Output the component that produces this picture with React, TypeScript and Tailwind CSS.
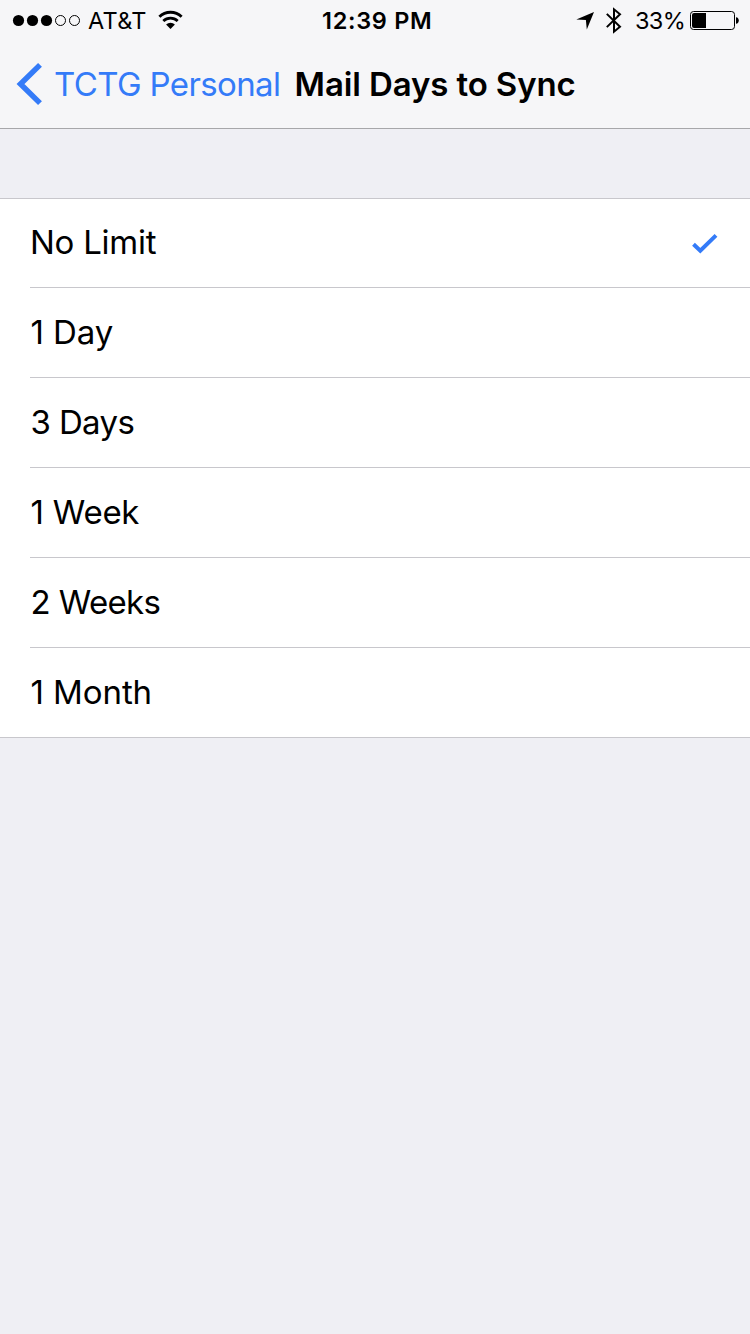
import React from "react";

const options = [
  { label: "No Limit", tracking: "tracking-[-0.25px]", selected: true },
  { label: "1 Day", tracking: "tracking-[-0.1px]" },
  { label: "3 Days", tracking: "tracking-[-0.65px]" },
  { label: "1 Week", tracking: "tracking-[-0.25px]" },
  { label: "2 Weeks", tracking: "tracking-[-0.65px]" },
  { label: "1 Month", tracking: "tracking-[-0.1px]" },
];

function SignalDots() {
  return (
    <svg width="70" height="14" viewBox="0 0 70 14" className="shrink-0">
      {[6, 20, 34].map((x) => (
        <circle key={x} cx={x + 0.5} cy="7.5" r="5.6" fill="#000" />
      ))}
      {[48, 62].map((x) => (
        <circle key={x} cx={x + 0.5} cy="7.5" r="5" fill="none" stroke="#000" strokeWidth="1" />
      ))}
    </svg>
  );
}

function WifiIcon() {
  return (
    <svg width="26" height="20" viewBox="0 0 26 20" className="shrink-0">
      <path d="M1.4 6.7A16 16 0 0 1 23.6 6.7" fill="none" stroke="#000" strokeWidth="2.9" />
      <path d="M5.3 11A10.4 10.4 0 0 1 19.7 11" fill="none" stroke="#000" strokeWidth="2.7" />
      <path d="M12.5 19L8.1 14.6A6.2 6.2 0 0 1 16.9 14.6Z" fill="#000" />
    </svg>
  );
}

function LocationIcon() {
  return (
    <svg width="18" height="20" viewBox="0 0 18 20" className="shrink-0">
      <path d="M18 2L10.8 19.5L9.9 10.1L0.3 9.5Z" fill="#000" />
    </svg>
  );
}

function BluetoothIcon() {
  return (
    <svg width="16" height="28" viewBox="0 0 16 28" className="shrink-0">
      <path d="M0.8 7.9L14 20.7L8 25.7V3.3L14 8.3L0.8 21.1" fill="none" stroke="#000" strokeWidth="2" />
    </svg>
  );
}

function BatteryIcon() {
  return (
    <svg width="49" height="20" viewBox="0 0 49 20" className="shrink-0">
      <rect x="0.5" y="1.5" width="44" height="18" rx="3" fill="none" stroke="#000" />
      <path d="M4 3H16V18H4A2 2 0 0 1 2 16V5A2 2 0 0 1 4 3Z" fill="#000" />
      <path d="M46 7.2C49.7 7.5 49.7 13.5 46 13.8Z" fill="#000" />
    </svg>
  );
}

export default function App() {
  return (
    <div className="flex h-[1334px] w-[750px] flex-col overflow-hidden bg-[#efeff4] font-['Inter','Liberation_Sans',sans-serif] text-black">
      <header className="h-[129px] shrink-0 border-b border-[#a7a7aa] bg-[#f6f6f8]">
        <div className="grid h-10 grid-cols-[322px_1fr_174px] items-center whitespace-nowrap text-[23.5px] leading-[38px]">
          <div className="flex items-center pl-3">
            <SignalDots />
            <span className="ml-[6px] w-[64px] pt-0.5 tracking-[0.3px]">AT&amp;T</span>
            <span className="ml-[6px] flex"><WifiIcon /></span>
          </div>
          <span className="pt-0.5 font-semibold tracking-[0.7px]">12:39 PM</span>
          <div className="flex items-center">
            <LocationIcon />
            <span className="ml-3 flex"><BluetoothIcon /></span>
            <span className="ml-[13px] w-[55px] pt-0.5 tracking-[-0.7px]">33%</span>
            <BatteryIcon />
          </div>
        </div>
        <nav className="flex h-[88px] items-center whitespace-nowrap text-[33px] leading-[88px]">
          <button className="flex items-center text-[#347bf8]">
            <svg width="54" height="44" viewBox="0 0 54 44" className="shrink-0">
              <path d="M40 2.9L20.5 22L40 41.1" fill="none" stroke="currentColor" strokeWidth="5.5" />
            </svg>
            <span className="w-[240.6px] text-left tracking-[-0.62px]">TCTG Personal</span>
          </button>
          <h1 className="font-semibold tracking-[-0.12px]">Mail Days to Sync</h1>
        </nav>
      </header>
      <main className="mt-[69px] border-t border-[#c8c7cc] bg-white">
        <ul>
          {options.map((o, i) => (
            <li key={o.label} className={i === options.length - 1 ? "border-b border-[#c8c7cc]" : "pl-[30px]"}>
              <button
                className={`flex w-full items-center justify-between pr-8 text-[33px] ${
                  i === 0 ? "h-[89px]" : i === options.length - 1 ? "h-[89px] pl-[30px]" : "h-[90px]"
                } ${i === options.length - 1 ? "" : "border-b border-[#c8c7cc]"}`}
              >
                <span className={`${i === 0 ? "" : "pl-[0.6px]"} ${o.tracking}`}>{o.label}</span>
                {o.selected && (
                  <svg width="26" height="22" viewBox="0 0 26 22" className="mt-0.5">
                    <path d="M1.5 11.2L8.3 17.7L24 2.4" fill="none" stroke="#347bf8" strokeWidth="4" />
                  </svg>
                )}
              </button>
            </li>
          ))}
        </ul>
      </main>
    </div>
  );
}
